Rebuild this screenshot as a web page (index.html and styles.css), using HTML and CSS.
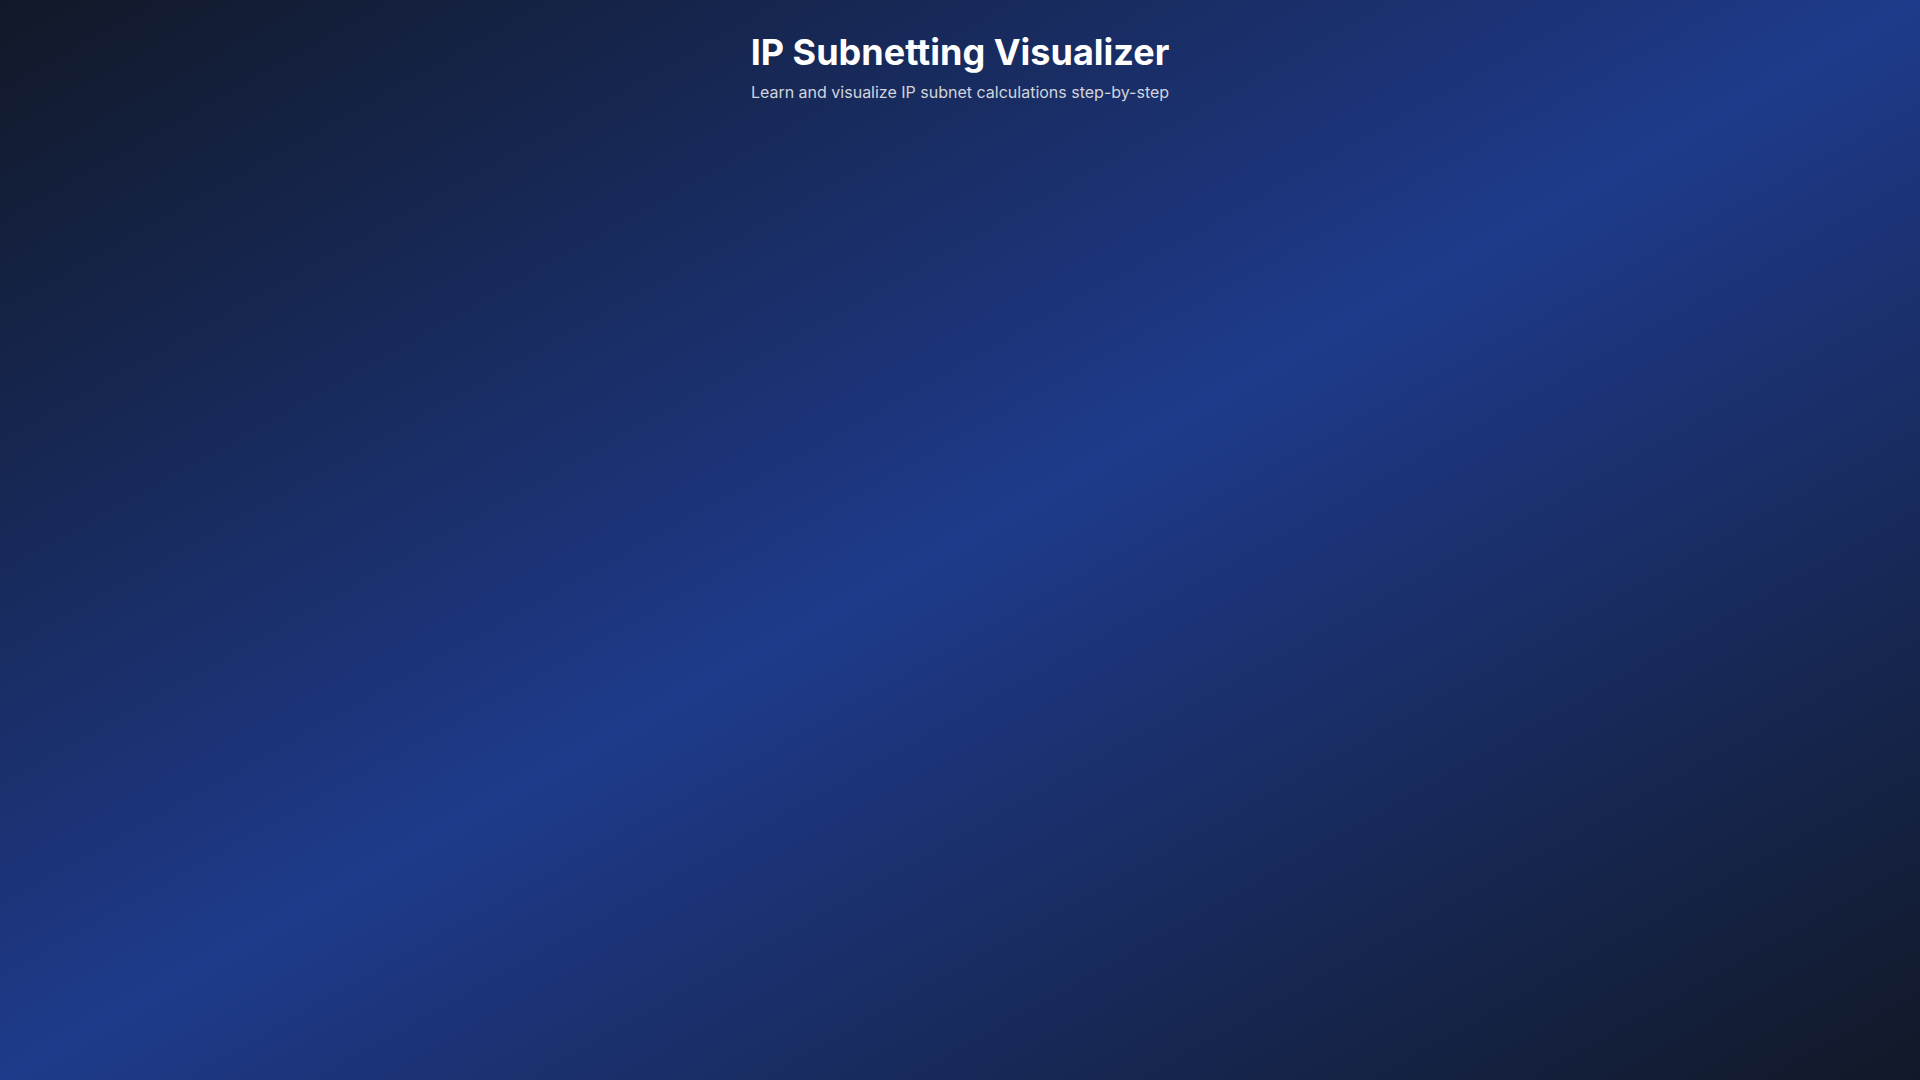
FILE: index.html
```html
<!DOCTYPE html>
<html lang="en">
<head>
<meta charset="utf-8">
<title>IP Subnetting Visualizer</title>
<link rel="stylesheet" href="styles.css">
</head>
<body>
<div class="page">
  <header class="header">
    <h1 class="title">IP Subnetting Visualizer</h1>
    <p class="subtitle">Learn and visualize IP subnet calculations step-by-step</p>
  </header>
</div>
</body>
</html>
```

FILE: styles.css
```css
html, body {
  margin: 0;
  padding: 0;
}
body {
  font-family: Inter, "Noto Sans", sans-serif;
}
.page {
  min-height: 100vh;
  box-sizing: border-box;
  background: linear-gradient(to bottom right, #111827, #1e3a8a, #111827);
  padding: 32px 16px;
}
.header {
  text-align: center;
}
.title {
  margin: 0 0 8px 0;
  font-size: 36px;
  line-height: 40px;
  font-weight: 700;
  color: #ffffff;
}
.subtitle {
  margin: 0;
  font-size: 16px;
  line-height: 24px;
  color: #d1d5db;
}
```
